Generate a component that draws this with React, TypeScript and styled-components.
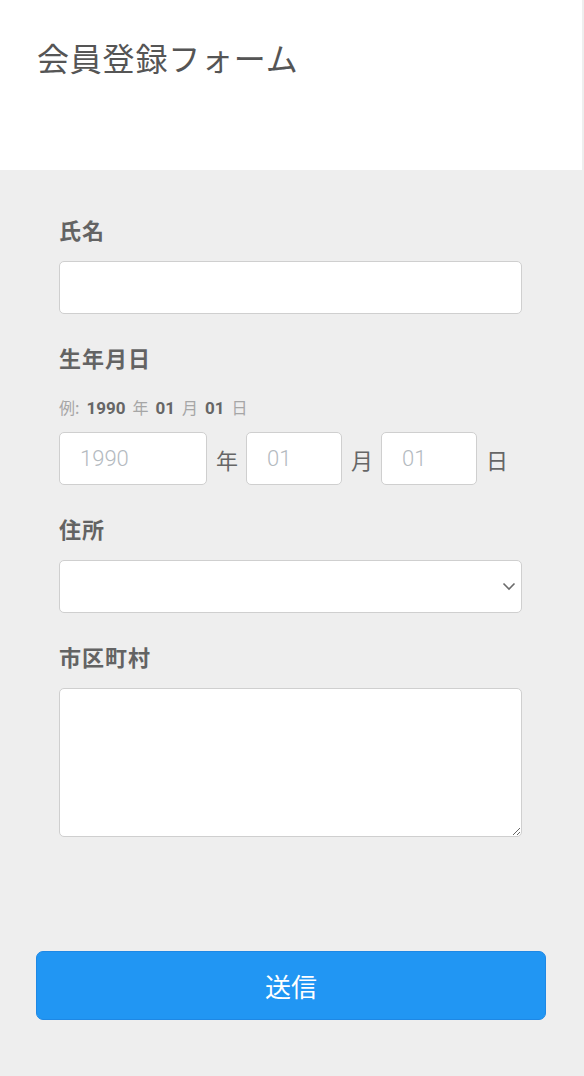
import React from "react";
import styled, { createGlobalStyle } from "styled-components";

const GlobalStyle = createGlobalStyle`
  html, body {
    margin: 0;
    padding: 0;
    background: #eeeeee;
  }
  body {
    font-family: "Noto Sans CJK JP", "Noto Sans", sans-serif;
    color: #666;
  }
  * { box-sizing: border-box; }
`;

const Page = styled.div`
  width: 582px;
  min-height: 1076px;
  background: #eeeeee;
`;

const Header = styled.header`
  height: 170px;
  background: #ffffff;
  padding: 33px 0 0 37px;
`;

const Title = styled.h1`
  margin: 0;
  font-size: 32px;
  line-height: 48px;
  font-weight: 400;
  color: #555;
  letter-spacing: 0.8px;
`;

const Form = styled.form`
  display: flex;
  flex-direction: column;
  padding: 44px 0 0 0;
`;

const Fields = styled.div`
  display: flex;
  flex-direction: column;
  gap: 28px;
  padding: 0 60px 0 59px;
`;

const Field = styled.div`
  display: flex;
  flex-direction: column;
`;

const Label = styled.label`
  font-size: 22px;
  line-height: 30px;
  font-weight: 700;
  color: #636363;
  letter-spacing: 1px;
  margin-bottom: 17px;
`;

const Hint = styled.div`
  font-size: 16px;
  line-height: 24px;
  color: #a6a6a6;
  margin: 6px 0 12px;
  display: flex;
  align-items: baseline;
  gap: 7px;
`;

const HintNum = styled.b`
  font-family: "Roboto", "Noto Sans", sans-serif;
  font-weight: 700;
  font-size: 17px;
  color: #666;
`;

const controlBase = `
  display: block;
  border: 1px solid #cfcfcf;
  border-radius: 5px;
  background: #ffffff;
  font-family: "Roboto", "Noto Sans CJK JP", sans-serif;
  font-size: 22px;
  font-weight: 300;
  color: #555;
  outline: none;
  &::placeholder {
    color: #b4babf;
  }
`;

const TextInput = styled.input<{ $w?: number }>`
  ${controlBase}
  height: 53px;
  width: ${(p) => (p.$w ? `${p.$w}px` : "100%")};
  padding: 0 20px;
  flex: none;
`;

const DateRow = styled.div`
  display: flex;
  align-items: center;
`;

const Unit = styled.span`
  font-size: 22px;
  color: #666;
  margin: 0 8px 0 9px;
  line-height: 30px;
`;

const SelectWrap = styled.div`
  position: relative;
`;

const Select = styled.select`
  ${controlBase}
  appearance: none;
  -webkit-appearance: none;
  width: 100%;
  height: 53px;
  padding: 0 20px;
`;

const Chevron = styled.svg`
  position: absolute;
  right: 6px;
  top: 22px;
  pointer-events: none;
`;

const TextArea = styled.textarea`
  ${controlBase}
  width: 100%;
  height: 149px;
  padding: 10px 20px;
  resize: vertical;
`;

const ButtonRow = styled.div`
  padding: 114px 37px 0 36px;
`;

const SubmitButton = styled.button`
  display: block;
  width: 510px;
  height: 69px;
  background: #2196f3;
  border: 1px solid #1e88e5;
  border-radius: 7px;
  color: #ffffff;
  font-family: "Noto Sans CJK JP", sans-serif;
  font-size: 26px;
  font-weight: 400;
  cursor: pointer;
`;

export default function App() {
  return (
    <>
      <GlobalStyle />
      <Page>
        <Header>
          <Title>会員登録フォーム</Title>
        </Header>
        <Form onSubmit={(e) => e.preventDefault()}>
          <Fields>
            <Field>
              <Label>氏名</Label>
              <TextInput type="text" />
            </Field>
            <Field>
              <Label>生年月日</Label>
              <Hint>
                <span>例:</span>
                <HintNum>1990</HintNum>
                <span>年</span>
                <HintNum>01</HintNum>
                <span>月</span>
                <HintNum>01</HintNum>
                <span>日</span>
              </Hint>
              <DateRow>
                <TextInput type="text" placeholder="1990" $w={148} />
                <Unit>年</Unit>
                <TextInput type="text" placeholder="01" $w={96} />
                <Unit>月</Unit>
                <TextInput type="text" placeholder="01" $w={96} />
                <Unit>日</Unit>
              </DateRow>
            </Field>
            <Field>
              <Label>住所</Label>
              <SelectWrap>
                <Select defaultValue="">
                  <option value=""></option>
                </Select>
                <Chevron width="14" height="9" viewBox="0 0 14 9">
                  <path d="M1.5 1.5 L7 7 L12.5 1.5" fill="none" stroke="#6b6b6b" strokeWidth="1.6" />
                </Chevron>
              </SelectWrap>
            </Field>
            <Field>
              <Label>市区町村</Label>
              <TextArea />
            </Field>
          </Fields>
          <ButtonRow>
            <SubmitButton type="submit">送信</SubmitButton>
          </ButtonRow>
        </Form>
      </Page>
    </>
  );
}
